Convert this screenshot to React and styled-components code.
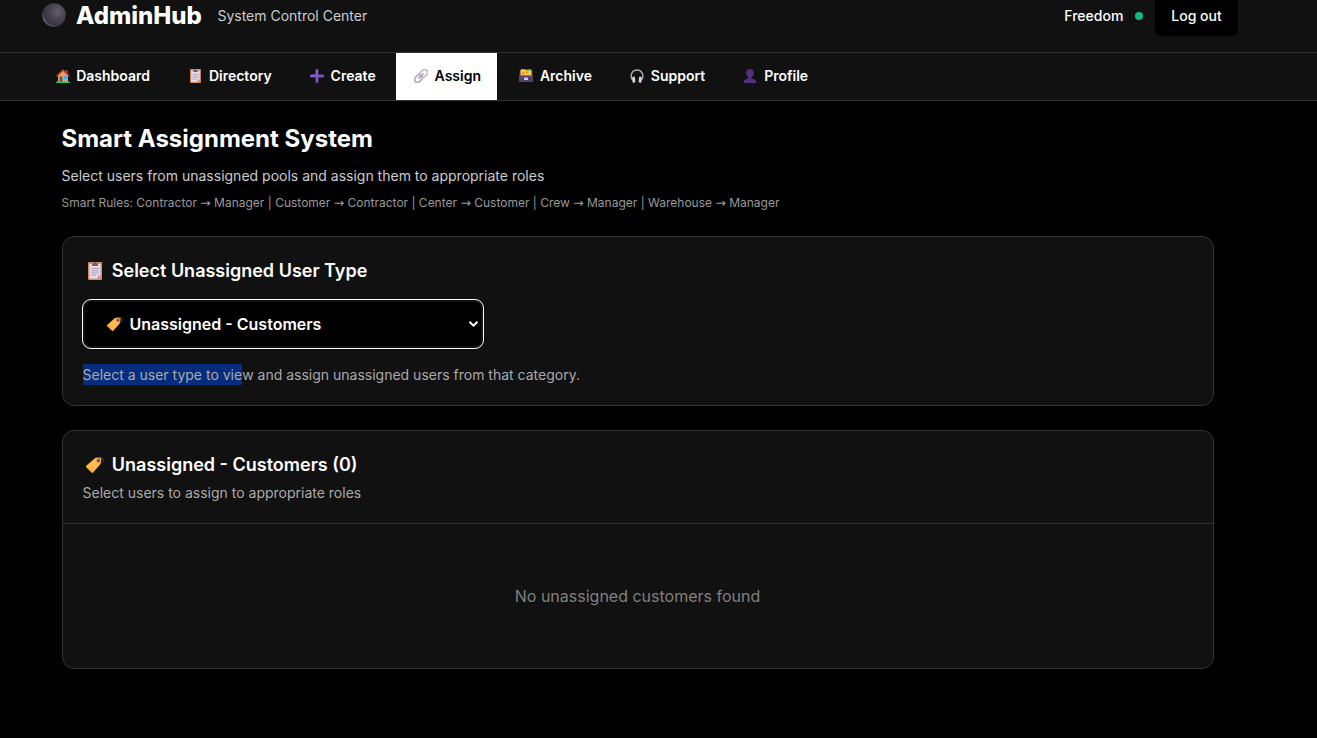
import React from "react";
import styled, { createGlobalStyle } from "styled-components";

const GlobalStyle = createGlobalStyle`
  * { box-sizing: border-box; }
  body {
    margin: 0;
    background: #000;
    color: #fff;
    font-family: Inter, "Noto Sans", sans-serif;
    overflow: hidden;
  }
  h1, h2, p { margin: 0; }
`;

const Page = styled.div`
  height: 738px;
  background: #000;
`;

const Header = styled.header`
  background: #111;
  height: 53px;
  border-bottom: 1px solid #333;
`;

const Container = styled.div`
  width: 1200px;
  margin-left: 37.5px;
  display: flex;
`;

const HeaderRow = styled(Container)`
  justify-content: space-between;
`;

const Brand = styled.div`
  display: flex;
  align-items: center;
  height: 32px;
  padding-left: 4px;
`;

const BrandMark = styled.svg`
  margin-top: -2px;
`;

const BrandName = styled.span`
  margin-left: 10.5px;
  font-size: 24px;
  font-weight: 800;
  line-height: 32px;
  white-space: nowrap;
`;

const Tagline = styled.span`
  margin-left: 15.6px;
  font-size: 14px;
  line-height: 32px;
  color: #ccc;
  white-space: nowrap;
`;

const Session = styled.div`
  display: flex;
  align-items: flex-start;
`;

const UserName = styled.span`
  font-size: 14px;
  font-weight: 500;
  line-height: 32px;
`;

const StatusDot = styled.span`
  width: 8px;
  height: 8px;
  margin: 12px 12px 0 11.2px;
  border-radius: 50%;
  background: #10b981;
`;

const LogoutButton = styled.button`
  width: 83px;
  height: 36px;
  padding: 0 0 4px 1px;
  border: 0;
  border-radius: 0 0 6px 6px;
  background: #000;
  color: #fff;
  font: 500 14px/32px Inter, sans-serif;
`;

const Nav = styled.nav`
  background: #111;
  height: 48px;
  border-bottom: 1px solid #333;
`;

const NavRow = styled(Container)`
  gap: 4.2px;
`;

const NavItem = styled.a`
  display: flex;
  align-items: center;
  height: 47px;
  padding: 0 16px 2px;
  font-size: 14px;
  font-weight: 600;
  line-height: 17px;
  white-space: nowrap;
  background: ${(p) => (p.$active ? "#fff" : "transparent")};
  color: ${(p) => (p.$active ? "#000" : "#fff")};
`;

const IconSlot = styled.span`
  display: inline-flex;
  flex: none;
  justify-content: center;
  width: ${(p) => p.$width}px;
  margin-right: ${(p) => p.$gap}px;
`;

const Main = styled.main`
  margin-left: 61.5px;
  width: 1152px;
  padding-top: 22px;
`;

const PageTitle = styled.h1`
  font-size: 24px;
  font-weight: 700;
  line-height: 32px;
`;

const Lead = styled.p`
  margin-top: 10px;
  font-size: 14px;
  line-height: 22px;
  color: #ccc;
`;

const Rules = styled.p`
  margin-top: 6px;
  font-size: 12px;
  line-height: 19px;
  height: 19px;
  color: #999;
`;

const Arrow = styled.span`
  font-family: "DejaVu Sans", sans-serif;
  font-size: 12.4px;
  line-height: 1;
`;

const Card = styled.section`
  margin-top: 24px;
  height: ${(p) => p.$height}px;
  border: 1px solid #333;
  border-radius: 12px;
  background: #111;
`;

const CardBody = styled.div`
  padding: 20px 19px;
`;

const CardHead = styled.div`
  height: 93px;
  padding: 20px 19px 0;
  border-bottom: 1px solid #333;
`;

const CardTitle = styled.h2`
  display: flex;
  align-items: center;
  font-size: 18px;
  font-weight: 600;
  line-height: 28px;
`;

const SelectBox = styled.div`
  display: flex;
  align-items: center;
  width: 402px;
  height: 50px;
  margin-top: 14px;
  padding: 0 4px 0 20px;
  border: 1px solid #fff;
  border-radius: 9px;
  background: #000;
  box-shadow: inset 0 0 0 2px #111;
  font-size: 16px;
  font-weight: 600;
`;

const Chevron = styled.svg`
  margin-left: auto;
`;

const Hint = styled.p`
  margin: ${(p) => p.$top}px 0 0 1px;
  font-size: 14px;
  line-height: 21px;
  color: #aaa;
`;

const Highlight = styled.span`
  display: inline-block;
  background: #062d7d;
`;

const Empty = styled.p`
  height: 144px;
  line-height: 144px;
  text-align: center;
  font-size: 16px;
  color: #808080;
`;

const MoonIcon = () => (
  <BrandMark width="24" height="24" viewBox="0 0 24 24">
    <defs>
      <radialGradient id="moon" cx="0.65" cy="0.35" r="0.7">
        <stop offset="0" stopColor="#625d69" />
        <stop offset="0.55" stopColor="#46404e" />
        <stop offset="0.85" stopColor="#3a3246" />
        <stop offset="1" stopColor="#6a6670" />
      </radialGradient>
    </defs>
    <circle cx="12" cy="12" r="11.8" fill="url(#moon)" />
  </BrandMark>
);

const HouseIcon = () => (
  <svg width="14" height="14" viewBox="0 0 14 14">
    <path d="M9.5 1h2v4h-2z" fill="#a84632" />
    <path d="M2 6.5 7 1.5l5 5V13H2z" fill="#dba476" />
    <path d="M.7 7.2 7 1.2l6.3 6" fill="none" stroke="#d9442f" strokeWidth="1.5" />
    <path d="M3.5 7.5h3V13h-3z" fill="#74503f" />
    <path d="M8 7.2h3.6v3H8z" fill="#39aef0" />
    <path d="M0 12.6h14V14H0z" fill="#27c06a" />
  </svg>
);

const ClipboardIcon = ({ width = 11, height = 14 }) => (
  <svg width={width} height={height} viewBox="0 0 14 18">
    <rect width="14" height="18" rx="1" fill="#d68b60" />
    <path d="M1.5 2h11v11.5l-3 3h-8z" fill="#e6def0" />
    <path d="M12.5 13.5h-3v3z" fill="#b8a9c8" />
    <path d="M4 1.6h1.6a1.4 1.4 0 0 1 2.8 0H10V4H4z" fill="#6b6375" />
    <path d="M3 6.5h8M3 8.8h8M3 11h8M3 13.2h5" stroke="#a99bb5" strokeWidth="1" />
  </svg>
);

const PlusIcon = () => (
  <svg width="14" height="14" viewBox="0 0 14 14">
    <path d="M7 1.300v11.400M1.300 7h11.400" stroke="#7952c4" strokeWidth="2.800" strokeLinecap="round" />
    <path d="M6.300 1v5.300H1" fill="none" stroke="#9578d2" strokeWidth=".8" />
  </svg>
);

const LinkIcon = () => (
  <svg width="14" height="14" viewBox="0 0 14 14" fill="none" strokeWidth="1.900">
    <g transform="rotate(-45 7 7)">
      <rect x="-.9" y="4" width="8.400" height="6" rx="3" stroke="#b8adc2" />
      <rect x="6.500" y="4" width="8.400" height="6" rx="3" stroke="#c6bdce" />
      <path d="M4 7h6" stroke="#a99db5" strokeWidth="1.500" strokeLinecap="round" />
    </g>
  </svg>
);

const ArchiveIcon = () => (
  <svg width="14" height="13" viewBox="0 0 14 13">
    <path d="M.6 1.500h12.800V8H.6z" fill="#54426b" />
    <path d="M1.500.8 2.200.2h4l1 .8h5.300V7h-11z" fill="#fbc846" />
    <path d="M8 .2h4.200v1.500H8z" fill="#38c172" />
    <path d="M3 3.700h2.300v1.300H3z" fill="#f0593e" />
    <path d="M7 2.500h2v1.200H7z" fill="#e5703a" />
    <path d="M0 6.500h14v5.700a.8.800 0 0 1-.8.8H.8a.8.800 0 0 1-.8-.8z" fill="#54426b" />
    <path d="M0 6.500h14v.8H0z" fill="#705d88" />
    <rect x="5" y="8.600" width="4" height="2.400" rx=".6" fill="#d3c6f2" />
  </svg>
);

const HeadphonesIcon = () => (
  <svg width="14" height="14" viewBox="0 0 14 14">
    <path d="M2 10.500C-.4 5.200 2.700 1 7 1s7.400 4.200 5 9.500" fill="none" stroke="#aaa5ae" strokeWidth="1.500" />
    <rect x="2.200" y="7.600" width="3" height="6.200" rx="1.400" fill="#d4d0d8" transform="rotate(-6 3.700 10.700)" />
    <rect x="8.800" y="7.600" width="3" height="6.200" rx="1.400" fill="#d4d0d8" transform="rotate(6 10.300 10.700)" />
  </svg>
);

const PersonIcon = () => (
  <svg width="14" height="14" viewBox="0 0 14 14">
    <path d="M7 0c2.400 0 3.700 1.600 3.700 3.900S9.500 7.800 8.700 8.300v1.200c2.400.3 4.600 1.300 4.600 4.500H.7c0-3.200 2.200-4.200 4.600-4.500V8.300C4.500 7.800 3.300 6.200 3.300 3.900S4.600 0 7 0z" fill="#533080" />
  </svg>
);

const TagIcon = ({ size = 18 }) => (
  <svg width={size} height={size * 0.89} viewBox="0 0 18 16">
    <path d="M10.200.8 14 .5a1.200 1.200 0 0 1 1.300 1.300l-.5 4.400a2 2 0 0 1-.5 1.100l-7 7.900a1.300 1.300 0 0 1-1.900.1L.6 10.500a1.300 1.300 0 0 1 0-1.900l8-7.200a2.500 2.500 0 0 1 1.600-.6z" fill="#fdbb4b" />
    <path d="M.6 10.500a1.300 1.300 0 0 1 0-1.900l.5-.4 5.900 7.200a1.300 1.300 0 0 1-1.600-.1z" fill="#f3a840" />
    <circle cx="12.300" cy="3.700" r="1.900" fill="#d8605a" />
    <circle cx="12.300" cy="3.700" r=".9" fill="#4a2038" />
    <path d="M12.300 3.700C12.800 1.300 14.500.5 15.900 1s2 2.200 1.300 3.500-2.200 1.700-3.300 1" fill="none" stroke="#5c5068" strokeWidth=".8" />
  </svg>
);

const navItems = [
  { label: "Dashboard", icon: <HouseIcon /> },
  { label: "Directory", icon: <ClipboardIcon /> },
  { label: "Create", icon: <PlusIcon /> },
  { label: "Assign", icon: <LinkIcon />, active: true },
  { label: "Archive", icon: <ArchiveIcon /> },
  { label: "Support", icon: <HeadphonesIcon /> },
  { label: "Profile", icon: <PersonIcon /> },
];

const rules = [
  ["Contractor", "Manager"],
  ["Customer", "Contractor"],
  ["Center", "Customer"],
  ["Crew", "Manager"],
  ["Warehouse", "Manager"],
];

export default function App() {
  return (
    <Page>
      <GlobalStyle />
      <Header>
        <HeaderRow>
          <Brand>
            <MoonIcon />
            <BrandName>AdminHub</BrandName>
            <Tagline>System Control Center</Tagline>
          </Brand>
          <Session>
            <UserName>Freedom</UserName>
            <StatusDot />
            <LogoutButton>Log out</LogoutButton>
          </Session>
        </HeaderRow>
      </Header>
      <Nav>
        <NavRow>
          {navItems.map(({ label, icon, active }) => (
            <NavItem key={label} $active={active}>
              <IconSlot $width={18} $gap={4.7}>{icon}</IconSlot>
              {label}
            </NavItem>
          ))}
        </NavRow>
      </Nav>
      <Main>
        <PageTitle>Smart Assignment System</PageTitle>
        <Lead>Select users from unassigned pools and assign them to appropriate roles</Lead>
        <Rules>
          Smart Rules:{" "}
          {rules.map(([from, to], i) => (
            <React.Fragment key={from}>
              {i > 0 && " | "}
              {from} <Arrow>→</Arrow> {to}
            </React.Fragment>
          ))}
        </Rules>
        <Card $height={170}>
          <CardBody>
            <CardTitle>
              <IconSlot $width={26} $gap={4.3}><ClipboardIcon width={14} height={18} /></IconSlot>
              Select Unassigned User Type
            </CardTitle>
            <SelectBox>
              <IconSlot $width={24} $gap={3}><TagIcon size={16} /></IconSlot>
              Unassigned - Customers
              <Chevron width="11" height="8" viewBox="0 0 11 8">
                <path d="m1.500 1.800 4 3.800 4-3.800" fill="none" stroke="#fff" strokeWidth="2" />
              </Chevron>
            </SelectBox>
            <Hint $top={15}>
              <Highlight>Select a user type to vie</Highlight>w and assign unassigned users from that category.
            </Hint>
          </CardBody>
        </Card>
        <Card $height={239}>
          <CardHead>
            <CardTitle>
              <IconSlot $width={26} $gap={4.3}><TagIcon size={18} /></IconSlot>
              Unassigned - Customers (0)
            </CardTitle>
            <Hint $top={3}>Select users to assign to appropriate roles</Hint>
          </CardHead>
          <Empty>No unassigned customers found</Empty>
        </Card>
      </Main>
    </Page>
  );
}
